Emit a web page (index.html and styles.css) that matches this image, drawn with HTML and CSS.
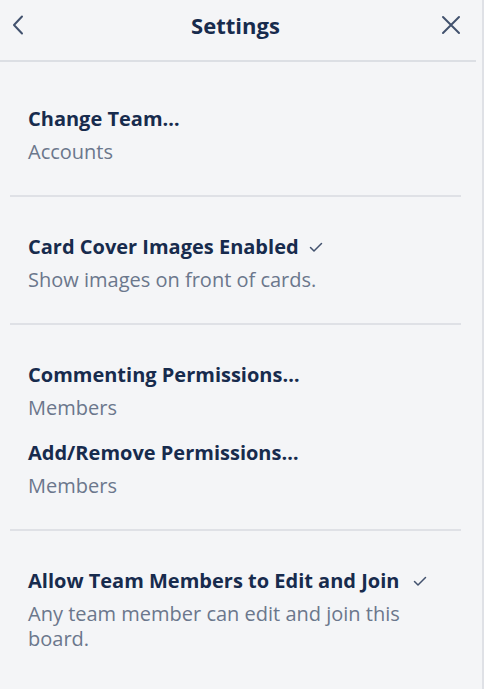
FILE: index.html
```html
<!DOCTYPE html>
<html>
<head>
<meta charset="utf-8">
<link rel="stylesheet" href="styles.css">
</head>
<body>
<div class="panel">
  <header class="header">
    <button class="icon-btn back" aria-label="Back">
      <svg width="12" height="20" viewBox="0 0 12 20"><path d="M10 1.5 L2 10 L10 18.5" fill="none" stroke="#42526e" stroke-width="2" stroke-linecap="round" stroke-linejoin="round"/></svg>
    </button>
    <h1 class="title">Settings</h1>
    <button class="icon-btn close" aria-label="Close">
      <svg width="20" height="20" viewBox="0 0 20 20"><path d="M2 2 L18 18 M18 2 L2 18" fill="none" stroke="#42526e" stroke-width="2" stroke-linecap="round"/></svg>
    </button>
  </header>
  <section class="section first">
    <div class="item">
      <div class="item-title">Change Team…</div>
      <div class="item-sub">Accounts</div>
    </div>
  </section>
  <section class="section">
    <div class="item">
      <div class="item-title">Card Cover Images Enabled <svg class="check" width="14" height="12" viewBox="0 0 14 12"><path d="M1.5 6.5 L5 10 L12.5 2.5" fill="none" stroke="#42526e" stroke-width="1.5" stroke-linecap="round" stroke-linejoin="round"/></svg></div>
      <div class="item-sub">Show images on front of cards.</div>
    </div>
  </section>
  <section class="section">
    <div class="item">
      <div class="item-title">Commenting Permissions…</div>
      <div class="item-sub">Members</div>
    </div>
    <div class="item">
      <div class="item-title">Add/Remove Permissions…</div>
      <div class="item-sub">Members</div>
    </div>
  </section>
  <section class="section last">
    <div class="item">
      <div class="item-title">Allow Team Members to Edit and Join <svg class="check wide" width="14" height="12" viewBox="0 0 14 12"><path d="M1.5 6.5 L5 10 L12.5 2.5" fill="none" stroke="#42526e" stroke-width="1.5" stroke-linecap="round" stroke-linejoin="round"/></svg></div>
      <div class="item-sub">Any team member can edit and join this board.</div>
    </div>
  </section>
</div>
</body>
</html>
```
FILE: styles.css
```css
html, body {
  margin: 0;
  padding: 0;
  background: #ffffff;
}
body {
  font-family: "Open Sans", "Noto Sans", sans-serif;
  color: #172b4d;
}
.panel {
  width: 484px;
  height: 689px;
  background: #f4f5f7;
  border-right: 2px solid #dfe1e6;
  box-sizing: border-box;
  overflow: hidden;
}
.header {
  width: 476px;
  height: 62px;
  box-sizing: border-box;
  border-bottom: 2px solid #dcdfe4;
  display: flex;
  align-items: center;
  justify-content: space-between;
  padding: 0 15px 10px 12px;
}
.icon-btn {
  background: none;
  border: none;
  padding: 0;
  display: flex;
  align-items: center;
}
.title {
  margin: 0;
  font-size: 22px;
  font-weight: 700;
  color: #172b4d;
  padding-left: 6px;
}
.section {
  margin-left: 10px;
  width: 451px;
  padding: 38px 0 31px 18px;
  box-sizing: border-box;
  border-bottom: 2px solid #dfe1e6;
  display: flex;
  flex-direction: column;
  gap: 21px;
}
.section.first {
  padding-top: 45px;
}
.section.last {
  border-bottom: none;
}
.item-title {
  font-size: 20px;
  font-weight: 700;
  line-height: 24px;
  color: #172b4d;
  display: flex;
  align-items: center;
  gap: 10px;
}
.check.wide {
  margin-left: 4px;
}
.item-sub {
  margin-top: 8px;
  font-size: 20px;
  line-height: 25px;
  color: #6b778c;
  width: 400px;
}
```
